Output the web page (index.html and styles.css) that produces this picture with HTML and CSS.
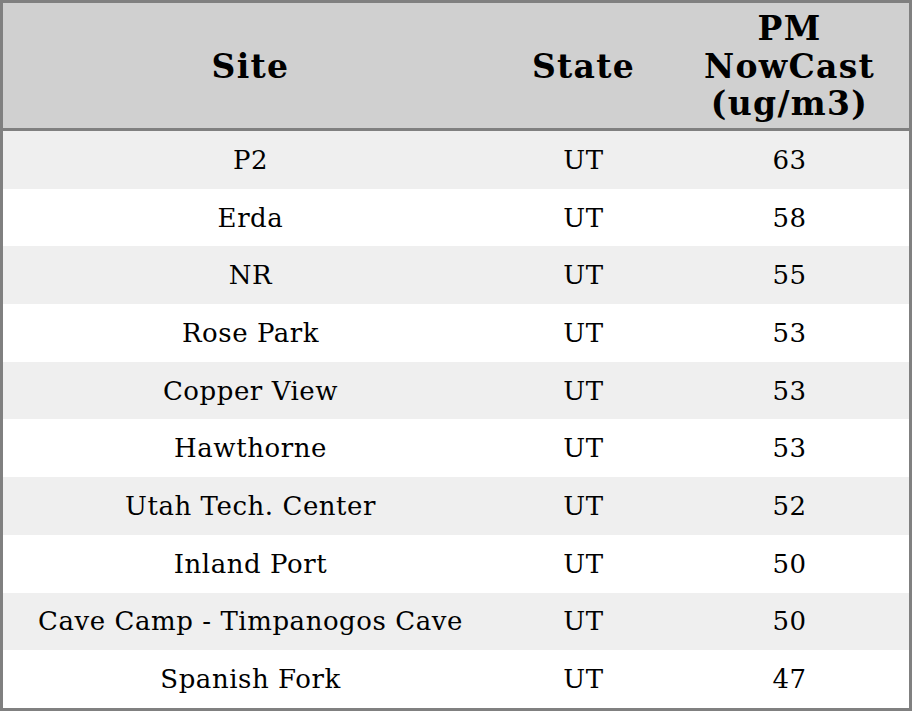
FILE: index.html
```html
<!DOCTYPE html>
<html>
<head>
<meta charset="utf-8">
<link rel="stylesheet" href="styles.css">
</head>
<body>
<table class="aq">
  <thead>
    <tr>
      <th class="c-site">Site</th>
      <th class="c-state">State</th>
      <th class="c-pm">PM<br>NowCast<br>(ug/m3)</th>
    </tr>
  </thead>
  <tbody>
    <tr><td>P2</td><td>UT</td><td>63</td></tr>
    <tr><td>Erda</td><td>UT</td><td>58</td></tr>
    <tr><td>NR</td><td>UT</td><td>55</td></tr>
    <tr><td>Rose Park</td><td>UT</td><td>53</td></tr>
    <tr><td>Copper View</td><td>UT</td><td>53</td></tr>
    <tr><td>Hawthorne</td><td>UT</td><td>53</td></tr>
    <tr><td>Utah Tech. Center</td><td>UT</td><td>52</td></tr>
    <tr><td>Inland Port</td><td>UT</td><td>50</td></tr>
    <tr><td>Cave Camp - Timpanogos Cave</td><td>UT</td><td>50</td></tr>
    <tr><td>Spanish Fork</td><td>UT</td><td>47</td></tr>
  </tbody>
</table>
</body>
</html>
```
FILE: styles.css
```css
html, body {
  margin: 0;
  padding: 0;
  background: #ffffff;
}
.aq {
  width: 912px;
  border: 3px solid #808080;
  border-spacing: 0;
  border-collapse: separate;
  font-family: "DejaVu Serif", serif;
  color: #000;
}
.aq th {
  background: #d0d0d0;
  font-size: 33px;
  font-weight: bold;
  letter-spacing: 1.3px;
  line-height: 37.5px;
  height: 123px;
  padding: 2px 0 0 1px;
  border-bottom: 3px solid #808080;
  text-align: center;
  vertical-align: middle;
}
.c-site { width: 493px; }
.c-state { width: 171px; }
.c-pm { width: 239px; }
.aq td {
  font-size: 26px;
  letter-spacing: 0.55px;
  height: 57.7px;
  padding: 0 0 0 1px;
  text-align: center;
  vertical-align: middle;
}
.aq tbody tr:nth-child(odd) td {
  background: #efefef;
}
```
